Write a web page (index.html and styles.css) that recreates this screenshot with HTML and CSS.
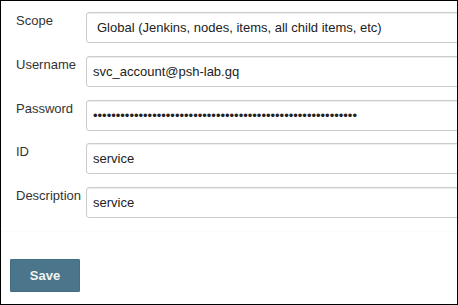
FILE: index.html
```
<!DOCTYPE html>
<html>
<head>
<meta charset="utf-8">
<link rel="stylesheet" href="styles.css">
</head>
<body>
<div class="frame">
  <form class="form">
    <div class="fields">
      <label class="label">Scope</label>
      <div class="field"><select class="select"><option>Global (Jenkins, nodes, items, all child items, etc)</option></select></div>
      <label class="label">Username</label>
      <div class="field"><input class="input" type="text" value="svc_account@psh-lab.gq"></div>
      <label class="label">Password</label>
      <div class="field"><input class="input" type="password" value="0123456789012345678901234567890123456789012345678901234567"></div>
      <label class="label">ID</label>
      <div class="field"><input class="input" type="text" value="service"></div>
      <label class="label">Description</label>
      <div class="field"><input class="input" type="text" value="service"></div>
    </div>
    <div class="actions">
      <button class="save" type="button">Save</button>
    </div>
  </form>
</div>
</body>
</html>
```
FILE: styles.css
```
html, body {
  margin: 0;
  padding: 0;
  background: #fff;
}
.frame {
  width: 458px;
  height: 305px;
  box-sizing: border-box;
  border: 1px solid #000;
  overflow: hidden;
  font-family: "Liberation Sans", Arial, sans-serif;
  font-size: 13px;
  color: #333;
}
.form {
  margin: 0;
}
.fields {
  display: grid;
  grid-template-columns: 70px 420px;
  row-gap: 12.75px;
  padding: 11px 0 0 15px;
}
.label {
  display: block;
  line-height: 15px;
  padding-top: 1px;
  color: #333;
}
.field {
  height: 31px;
}
.input, .select {
  display: block;
  box-sizing: border-box;
  width: 420px;
  height: 31px;
  margin: 0;
  padding: 0 6px;
  border: 1px solid #ccc;
  border-radius: 3px;
  background: #fff;
  box-shadow: inset 0 1px 1px rgba(0, 0, 0, 0.075);
  font-family: "Liberation Sans", Arial, sans-serif;
  font-size: 13px;
  color: #222;
  outline: none;
}
.select {
  -webkit-appearance: none;
  appearance: none;
  padding-left: 10px;
}
.actions {
  margin-top: 13px;
  border-top: 1px dotted #f8f8f8;
  padding: 27px 0 0 9px;
}
.save {
  display: block;
  box-sizing: border-box;
  width: 70px;
  height: 33px;
  margin: 0;
  padding: 0;
  border: 1px solid #436d82;
  border-radius: 1px;
  background: #4b758b;
  color: #f4f4f4;
  font-family: "Liberation Sans", Arial, sans-serif;
  font-size: 13px;
  font-weight: bold;
}
```
